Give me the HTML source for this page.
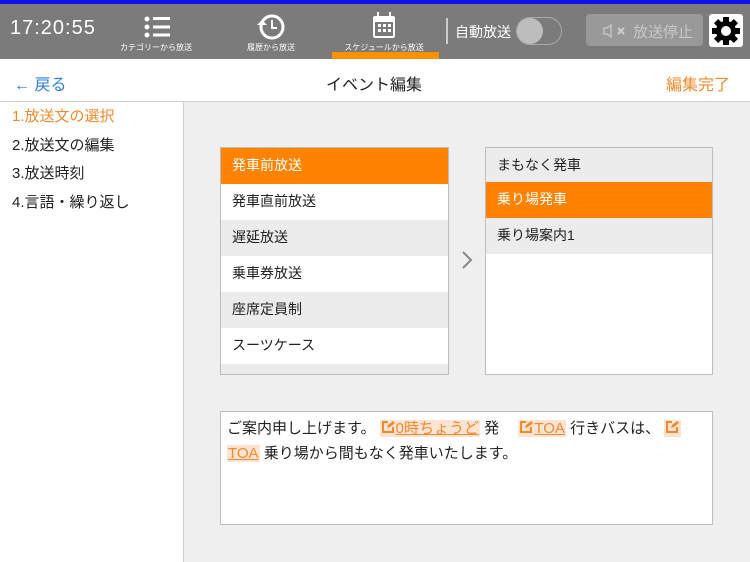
<!DOCTYPE html><html><head><meta charset="utf-8"><style>
*{margin:0;padding:0;box-sizing:border-box}
body{width:750px;height:562px;overflow:hidden;font-family:"Liberation Sans","Noto Sans CJK JP",sans-serif;background:#efefef;position:relative;color:#222}
.a{position:absolute}
.hdr{left:0;top:0;width:750px;height:59px;background:#7b7b7b;border-top:4px solid #1010e8}
.nav{left:0;top:59px;width:750px;height:43px;background:#fff;border-bottom:1px solid #d0d0d0}
.side{left:0;top:102px;width:184px;height:460px;background:#fff;border-right:1px solid #d0d0d0}
.side div{height:28.7px;font-size:15px;padding-left:12px;line-height:28px}
.box{background:#fff;border:1px solid #bdbdbd;overflow:hidden}
.row{height:36px;line-height:35px;font-size:14px;padding-left:11px}
.o{background:#ff8300;color:#fff}.g{background:#ececec}
.tl{color:#fff;font-size:8px;text-align:center;width:100px}
.tag{background:#fde3d2;color:#f08a2c;text-decoration:underline;padding:0 1px}
.ic{display:inline-block;width:14px;height:14px;vertical-align:-1px;margin-right:1px}
</style></head><body>
<div class="a hdr">
<div class="a" style="left:10px;top:13px;font-size:20px;color:#fff;letter-spacing:1px">17:20:55</div>
<svg class="a" style="left:143px;top:12px" width="28" height="22"><g fill="#fff"><circle cx="4" cy="3" r="2.5"/><circle cx="4" cy="11" r="2.5"/><circle cx="4" cy="19" r="2.5"/><rect x="10" y="1" width="17" height="3"/><rect x="10" y="9.5" width="17" height="3"/><rect x="10" y="17.5" width="17" height="3"/></g></svg>
<div class="a tl" style="left:106px;top:38px">カテゴリーから放送</div>
<svg class="a" style="left:256px;top:9px" width="30" height="28"><circle cx="16" cy="14" r="11" fill="none" stroke="#fff" stroke-width="3"/><path d="M16 7v8h5" stroke="#fff" stroke-width="2" fill="none"/><path d="M1 12l5-5 5 5z" fill="#fff"/></svg>
<div class="a tl" style="left:221px;top:38px">履歴から放送</div>
<svg class="a" style="left:372px;top:8px" width="24" height="28"><rect x="1" y="4" width="22" height="22" rx="2" fill="#fff"/><rect x="3" y="10" width="18" height="14" fill="#7b7b7b"/><g fill="#fff"><rect x="6" y="12" width="3" height="3"/><rect x="11" y="12" width="3" height="3"/><rect x="16" y="12" width="3" height="3"/><rect x="6" y="17" width="3" height="3"/><rect x="11" y="17" width="3" height="3"/><rect x="16" y="17" width="3" height="3"/><rect x="5" y="0" width="2" height="6"/><rect x="17" y="0" width="2" height="6"/></g></svg>
<div class="a tl" style="left:334px;top:38px">スケジュールから放送</div>
<div class="a" style="left:332px;top:48px;width:107px;height:7px;background:#ff9000"></div>
<div class="a" style="left:446px;top:14px;width:2px;height:26px;background:#ccc"></div>
<div class="a" style="left:455px;top:18px;font-size:14px;color:#fff">自動放送</div>
<div class="a" style="left:516px;top:13px;width:46px;height:28px;border-radius:14px;border:1px solid #aaa"><div style="width:26px;height:26px;border-radius:13px;background:#bdbdbd"></div></div>
<div class="a" style="left:586px;top:10px;width:117px;height:32px;background:#999;border-radius:4px"></div>
<svg class="a" style="left:603px;top:20px" width="26" height="14"><path d="M1 4h3l4-3v12l-4-3H1z" fill="none" stroke="#ccc" stroke-width="1.2"/><path d="M15 4l6 6M21 4l-6 6" stroke="#ccc" stroke-width="2.2"/></svg>
<div class="a" style="left:633px;top:17px;font-size:15px;color:#c8c8c8">放送停止</div>
<div class="a" style="left:709px;top:10px;width:34px;height:33px;background:#fff;border-radius:3px"></div>
<svg class="a" style="left:711px;top:12px" width="30" height="30" viewBox="0 0 30 30"><g transform="translate(15 15)"><g fill="#000"><rect x="-3" y="-14" width="6" height="28"/><rect x="-3" y="-14" width="6" height="28" transform="rotate(45)"/><rect x="-3" y="-14" width="6" height="28" transform="rotate(90)"/><rect x="-3" y="-14" width="6" height="28" transform="rotate(135)"/><circle r="10"/></g><circle r="5" fill="#fff"/></g></svg>
</div>
<div class="a nav">
<div class="a" style="left:14px;top:12px;font-size:16px;color:#2e7ddc">← 戻る</div>
<div class="a" style="left:326px;top:12px;font-size:16px">イベント編集</div>
<div class="a" style="left:666px;top:12px;font-size:16px;color:#f08a2c">編集完了</div>
</div>
<div class="a side" style="padding-top:1px">
<div style="color:#f08a2c">1.放送文の選択</div><div>2.放送文の編集</div><div>3.放送時刻</div><div>4.言語・繰り返し</div>
</div>
<div class="a box" style="left:220px;top:147px;width:229px;height:228px">
<div class="row o">発車前放送</div><div class="row">発車直前放送</div><div class="row g">遅延放送</div><div class="row">乗車券放送</div><div class="row g">座席定員制</div><div class="row">スーツケース</div><div class="row g"></div>
</div>
<svg class="a" style="left:461px;top:250px" width="12" height="20"><path d="M2 2l8 8-8 8" fill="none" stroke="#888" stroke-width="2"/></svg>
<div class="a box" style="left:485px;top:147px;width:228px;height:228px">
<div class="row g" style="height:34px">まもなく発車</div><div class="row o">乗り場発車</div><div class="row g">乗り場案内1</div>
</div>
<div class="a box" style="left:220px;top:411px;width:493px;height:114px;padding:4px 6px;font-size:15px;line-height:25px">
ご案内申し上げます。 <span class="tag"><svg class="ic" viewBox="0 0 14 14"><path d="M7 2H2v10h10V7" fill="none" stroke="#f08a2c" stroke-width="2"/><path d="M6 8l1-3 5-4 2 2-5 4z" fill="#f08a2c"/></svg>0時ちょうど</span> 発　 <span class="tag"><svg class="ic" viewBox="0 0 14 14"><path d="M7 2H2v10h10V7" fill="none" stroke="#f08a2c" stroke-width="2"/><path d="M6 8l1-3 5-4 2 2-5 4z" fill="#f08a2c"/></svg>TOA</span> 行きバスは、 <span class="tag" style="text-decoration:none"><svg class="ic" viewBox="0 0 14 14"><path d="M7 2H2v10h10V7" fill="none" stroke="#f08a2c" stroke-width="2"/><path d="M6 8l1-3 5-4 2 2-5 4z" fill="#f08a2c"/></svg></span><br><span class="tag">TOA</span> 乗り場から間もなく発車いたします。
</div>
</body></html>
